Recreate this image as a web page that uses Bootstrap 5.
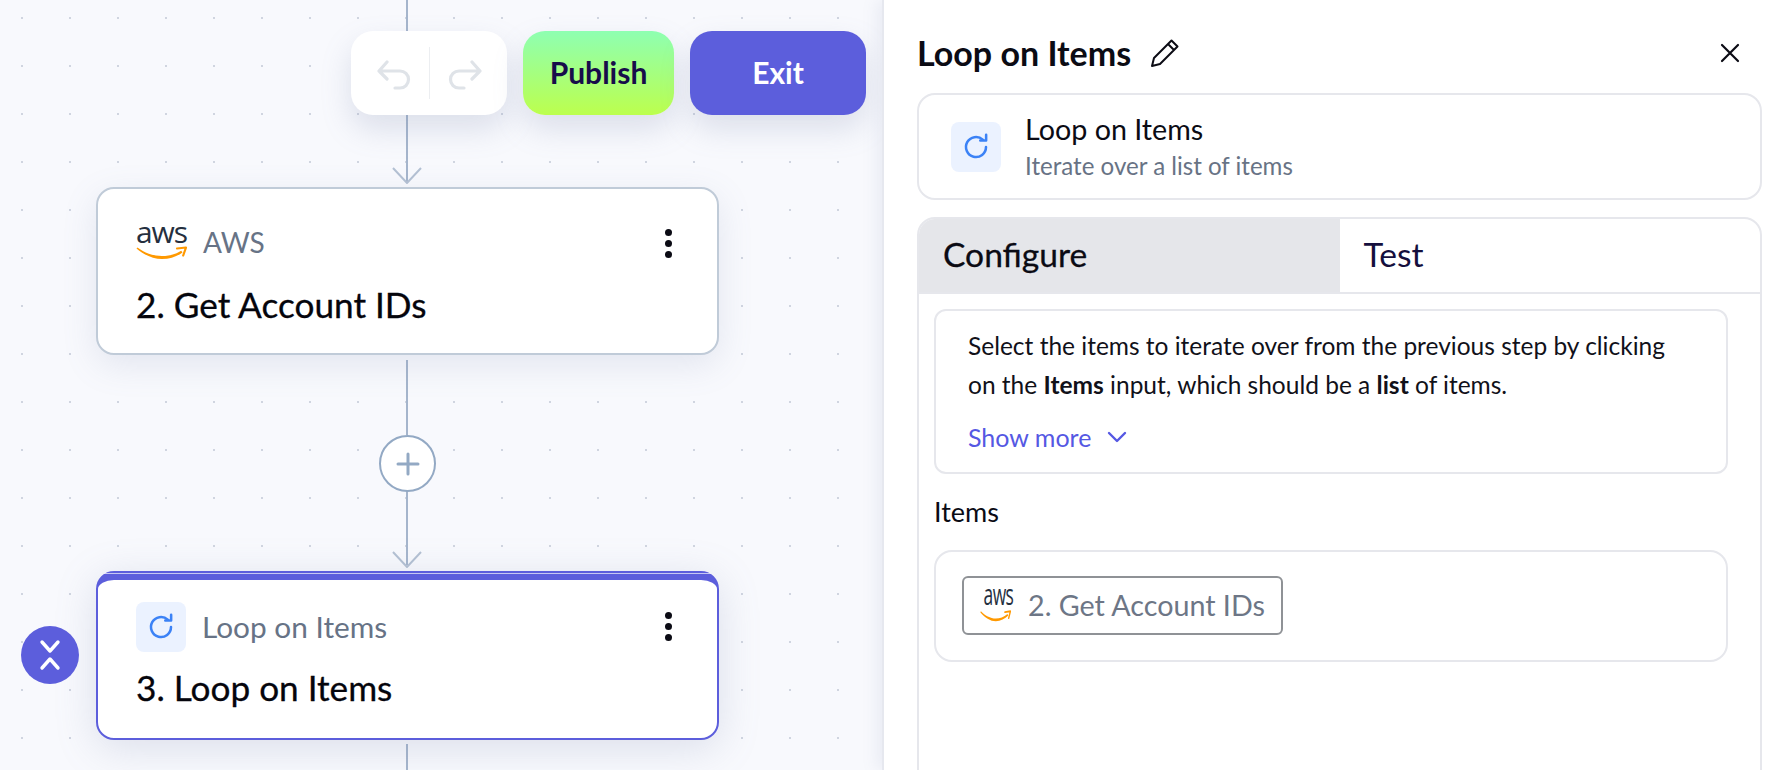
<!DOCTYPE html>
<html lang="en">
<head>
  <meta charset="UTF-8"/>
  <meta name="viewport" content="width=device-width, initial-scale=1.0"/>
  <title>Flow builder - Loop on Items</title>
  <link href="https://cdn.jsdelivr.net/npm/bootstrap@5.3.0/dist/css/bootstrap.min.css" rel="stylesheet"/>
  <style>
    html, body { height: 770px; overflow: hidden; }
    body { font-family: "Lato", "Liberation Sans", sans-serif; background: #fff; color: #0b0b14; }
    .flow-canvas {
      width: 884px; height: 770px; flex: none; overflow: hidden;
      background-color: #f8f9fd;
      background-image: radial-gradient(circle, #d0d5e0 1px, transparent 1.4px);
      background-size: 48px 48px;
      background-position: -2px -6px;
    }
    .edge { position: absolute; left: 406px; width: 2px; background: #a5b5cc; }
    .edge-arrow { position: absolute; left: 392px; width: 30px; height: 17px; }
    .add-step {
      position: absolute; left: 379px; top: 435px; width: 57px; height: 57px;
      background: #fff; border: 2px solid #93a9c4; border-radius: 50%;
    }
    .tool-group, .tool-btn { position: absolute; top: 31px; height: 84px; border-radius: 22px; box-shadow: 0 14px 30px rgba(120, 132, 170, .22); }
    .tool-group { left: 351px; width: 156px; background: #fff; }
    .tool-sep { width: 1px; height: 52px; background: #eceef1; }
    .tool-icon { margin-top: 6px; }
    .tool-btn { border: 0; font-size: 30px; font-weight: 700; padding: 0 0 2px; }
    .tool-publish { left: 523px; width: 151px; color: #170d4a; background: linear-gradient(180deg, #8effb2, #bcff4d); }
    .tool-exit { left: 690px; width: 176px; color: #fff; background: #5c5edc; }
    .flow-node {
      position: absolute; left: 96px; width: 623px; background: #fff; border: 2px solid #c0cbd8;
      border-radius: 18px; padding: 35px 38px 0; box-shadow: 0 10px 34px rgba(120, 132, 170, .16);
    }
    .flow-node.selected { border-color: #5c5edc; border-top-width: 9px; padding-top: 22px; box-shadow: 0 8px 40px rgba(120, 132, 170, .22); }
    .flow-node.selected::before { content: ""; position: absolute; top: -7px; left: 6px; right: 6px; height: 1px; background: rgba(255, 255, 255, .65); }
    .node-label { font-size: 29.8px; color: #677386; line-height: 34px; }
    .node-label-short { font-size: 28px; }
    .node-title { font-size: 35.2px; line-height: 40px; color: #05050c; -webkit-text-stroke: .3px #05050c; }
    .aws-logo { position: relative; display: block; width: 51px; height: 32px; flex: none; margin-top: 4px; }
    .aws-word { position: absolute; left: -5px; right: -5px; top: -13px; text-align: center; font: 500 30px/34px "Open Sans", sans-serif; color: #252f3e; letter-spacing: -1px; }
    .aws-logo svg { position: absolute; left: 0; bottom: 0; }
    .loop-icon { width: 50px; height: 50px; flex: none; background: #ebf2ff; border-radius: 8px; }
    .kebab { position: absolute; right: 45px; top: 40px; width: 7px; }
    .kebab i { display: block; width: 7px; height: 7px; margin-bottom: 4px; border-radius: 50%; background: #0b0b14; }
    .selected .kebab { top: 32px; }
    .collapse-btn { position: absolute; left: 21px; top: 626px; width: 58px; height: 58px; border-radius: 50%; background: #5c5edc; }
    .side-panel { flex: 1 1 auto; height: 770px; overflow: hidden; padding: 0 14px 0 33px; border-left: 2px solid #e6e8ef; margin-left: -2px; position: relative; background: #fff; box-shadow: -6px 0 14px rgba(120, 132, 170, .1); }
    .side-head { height: 93px; padding: 13px 22px 0 0; }
    .side-title { font-size: 34px; font-weight: 700; margin: 0 19px 0 0; line-height: 1; }
    .side-box { border: 2px solid #e6e7ec; border-radius: 18px; background: #fff; }
    .piece-box { height: 107px; padding: 0 32px; margin-bottom: 17px; }
    .piece-name { font-size: 28.7px; line-height: 36px; color: #0b0b14; }
    .piece-desc { font-size: 24.1px; line-height: 34px; color: #687385; margin-top: 2px; }
    .tab-box { height: 620px; overflow: hidden; padding: 0; }
    .tab-row { height: 75px; border-bottom: 2px solid #e6e7ec; }
    .tab-cell { width: 50%; padding-left: 24px; font-size: 33.6px; line-height: 71px; color: #150f3d; }
    .tab-cell.active { background: #e5e6ea; color: #0b0b14; -webkit-text-stroke: .3px #0b0b14; }
    .tab-body { padding: 15px 32px 0 15px; }
    .info-box { height: 165px; border-radius: 12px; padding: 15px 32px; font-size: 24.5px; line-height: 39px; color: #111119; }
    .show-more { font-size: 25px; color: #5558e3; margin-top: 16px; line-height: 34px; }
    .field-label { font-size: 27px; line-height: 34px; margin: 21px 0 21px; }
    .field-box { height: 112px; padding: 24px 26px; }
    .step-chip { display: inline-flex; align-items: center; height: 59px; padding: 0 16px; gap: 17px; border: 2px solid #8f9296; border-radius: 6px; font-size: 28.7px; color: #6d7686; }
    .step-chip .aws-logo { width: 31px; height: 32px; margin-top: 0; }
    .step-chip .aws-word { transform: scaleX(.58); }
  </style>
</head>
<body class="d-flex">
  <svg width="0" height="0" class="position-absolute">
    <defs>
      <symbol id="loop" viewBox="0 0 24 24">
        <path d="M19.500 12a7.500 7.500 0 1 1-2.400-5.500" fill="none" stroke="#3b82f6" stroke-width="1.900" stroke-linecap="round"/>
        <path d="M19.600 2.800v4.400h-4.400" fill="none" stroke="#3b82f6" stroke-width="1.900" stroke-linecap="round" stroke-linejoin="round"/>
      </symbol>
      <symbol id="smile" viewBox="0 0 51 14" preserveAspectRatio="none">
        <path d="M.5 2.500C8 9 17 13 26 13c8 0 15-2.500 20.500-6.500l-1.300-1.800C39 8.500 33 10 26 10 17 10 8 6.500 1.500 1.500z" fill="#f90"/>
        <path d="M41 2.500l9-1-2.800 8" fill="none" stroke="#f90" stroke-width="2.200" stroke-linecap="round" stroke-linejoin="round"/>
      </symbol>
    </defs>
  </svg>

  <div class="flow-canvas position-relative">
    <div class="edge" style="top:0;height:182px"></div>
    <svg class="edge-arrow" style="top:167px" viewBox="0 0 30 17"><path d="M1 1l14 15L29 1" fill="none" stroke="#b4c1d3" stroke-width="2"/></svg>
    <div class="edge" style="top:360px;height:75px"></div>
    <div class="edge" style="top:491px;height:74px"></div>
    <svg class="edge-arrow" style="top:551px" viewBox="0 0 30 17"><path d="M1 1l14 15L29 1" fill="none" stroke="#b4c1d3" stroke-width="2"/></svg>
    <div class="edge" style="top:744px;height:26px"></div>

    <div class="tool-group d-flex align-items-center justify-content-center">
      <svg width="36" height="36" viewBox="0 0 36 36" class="tool-icon ms-2 me-3"><path d="M11 3L3 12l8 8M3 12h21a8 8 0 0 1 0 17h-5" fill="none" stroke="#dfe3e8" stroke-width="3.200" stroke-linecap="round" stroke-linejoin="round" transform="translate(-1 1)"/></svg>
      <div class="tool-sep"></div>
      <svg width="36" height="36" viewBox="0 0 36 36" class="tool-icon ms-3 me-2"><path d="M25 3l8 9-8 8M33 12H12a8 8 0 0 0 0 17h5" fill="none" stroke="#dfe3e8" stroke-width="3.200" stroke-linecap="round" stroke-linejoin="round" transform="translate(1 1)"/></svg>
    </div>
    <button class="btn tool-btn tool-publish" type="button">Publish</button>
    <button class="btn tool-btn tool-exit" type="button">Exit</button>

    <div class="flow-node" style="top:187px;height:168px">
      <div class="d-flex align-items-center gap-3">
        <span class="aws-logo"><span class="aws-word">aws</span><svg width="51" height="14"><use href="#smile"/></svg></span>
        <span class="node-label node-label-short">AWS</span>
      </div>
      <div class="node-title" style="margin-top:24px">2. Get Account IDs</div>
      <div class="kebab"><i></i><i></i><i></i></div>
    </div>

    <div class="add-step d-flex align-items-center justify-content-center">
      <svg width="24" height="24" viewBox="0 0 24 24"><path d="M12 2v20M2 12h20" stroke="#93a9c4" stroke-width="3" stroke-linecap="round"/></svg>
    </div>

    <div class="flow-node selected" style="top:571px;height:169px">
      <div class="d-flex align-items-center gap-3">
        <span class="loop-icon d-flex align-items-center justify-content-center"><svg width="32" height="32"><use href="#loop"/></svg></span>
        <span class="node-label">Loop on Items</span>
      </div>
      <div class="node-title" style="margin-top:15px">3. Loop on Items</div>
      <div class="kebab"><i></i><i></i><i></i></div>
    </div>

    <div class="collapse-btn d-flex align-items-center justify-content-center">
      <svg width="22" height="34" viewBox="0 0 22 34"><path d="M3 4l8 9 8-9M3 30l8-9 8 9" fill="none" stroke="#fff" stroke-width="3.400" stroke-linecap="round" stroke-linejoin="round"/></svg>
    </div>
  </div>

  <aside class="side-panel">
    <div class="side-head d-flex align-items-center justify-content-between">
      <div class="d-flex align-items-center">
        <h1 class="side-title">Loop on Items</h1>
        <svg width="30" height="30" viewBox="0 0 30 30"><path d="M21.500 2.500l6 6L10 26l-8 2 2-8zM18 6l6 6" fill="none" stroke="#0b0b14" stroke-width="2" stroke-linejoin="round"/></svg>
      </div>
      <svg width="20" height="20" viewBox="0 0 20 20"><path d="M2 2l16 16M18 2L2 18" stroke="#0b0b14" stroke-width="2.200" stroke-linecap="round"/></svg>
    </div>

    <div class="side-box piece-box d-flex align-items-center gap-4">
      <span class="loop-icon d-flex align-items-center justify-content-center"><svg width="32" height="32"><use href="#loop"/></svg></span>
      <div>
        <div class="piece-name">Loop on Items</div>
        <div class="piece-desc">Iterate over a list of items</div>
      </div>
    </div>

    <div class="side-box tab-box">
      <div class="tab-row d-flex">
        <div class="tab-cell active">Configure</div>
        <div class="tab-cell">Test</div>
      </div>
      <div class="tab-body">
        <div class="side-box info-box">
          <div>Select the items to iterate over from the previous step by clicking<br>on the <b>Items</b> input, which should be a <b>list</b> of items.</div>
          <div class="show-more d-flex align-items-center gap-3">Show more
            <svg width="20" height="12" viewBox="0 0 20 12"><path d="M2 2l8 8 8-8" fill="none" stroke="#5558e3" stroke-width="2.400" stroke-linecap="round" stroke-linejoin="round"/></svg>
          </div>
        </div>
        <div class="field-label">Items</div>
        <div class="side-box field-box">
          <span class="step-chip">
            <span class="aws-logo"><span class="aws-word">aws</span><svg width="31" height="12"><use href="#smile"/></svg></span>
            2. Get Account IDs
          </span>
        </div>
      </div>
    </div>
  </aside>

  <script src="https://cdn.jsdelivr.net/npm/bootstrap@5.3.0/dist/js/bootstrap.bundle.min.js"></script>
</body>
</html>
